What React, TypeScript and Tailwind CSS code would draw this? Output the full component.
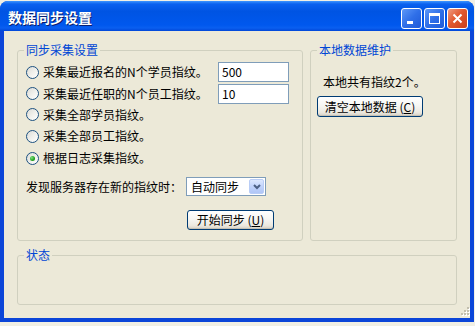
import React from "react";

function Radio({ checked = false }: { checked?: boolean }) {
  return (
    <span className="relative grid h-[13px] w-[13px] shrink-0 place-items-center rounded-full border border-[#1c5180] bg-[linear-gradient(135deg,#dcdcd7_0%,#f3f3ef_60%,#ffffff_100%)]">
      {checked && (
        <span className="h-[5px] w-[5px] rounded-full bg-[radial-gradient(circle_at_35%_35%,#7fe07f_0%,#21a121_60%,#128512_100%)]" />
      )}
    </span>
  );
}

function XpButton({
  label,
  hotkey,
  className,
}: {
  label: string;
  hotkey: string;
  className?: string;
}) {
  return (
    <button
      type="button"
      className={
        "flex items-center justify-center rounded-[3px] border border-[#003c74] bg-[linear-gradient(to_bottom,#ffffff_0%,#f6f6f3_45%,#ece9e0_80%,#d6d0c5_100%)] text-[12px] leading-[14px] text-black shadow-[inset_0_-1px_0_#c6c1b4] " +
        (className ?? "")
      }
    >
      {label} (<u>{hotkey}</u>)
    </button>
  );
}

function GroupBox({
  title,
  className,
  children,
}: {
  title: string;
  className?: string;
  children?: React.ReactNode;
}) {
  return (
    <fieldset
      className={
        "rounded-[3px] border border-[#d0d0bf] " + (className ?? "")
      }
    >
      <legend className="ml-[6px] px-[2px] text-[12px] leading-[14px] text-[#0046d5]">
        {title}
      </legend>
      {children}
    </fieldset>
  );
}

function RadioRow({
  label,
  value,
  checked,
  h,
}: {
  label: string;
  value?: string;
  checked?: boolean;
  h: string;
}) {
  return (
    <div className={"flex items-center gap-[4px] " + h}>
      <Radio checked={checked} />
      <span className="flex-1 text-[12px] leading-[14px]">{label}</span>
      {value !== undefined && (
        <div className="mr-[13px] flex h-[20px] w-[71px] items-center border border-[#7f9db9] bg-white pl-[3px] text-[12px]">
          {value}
        </div>
      )}
    </div>
  );
}

export default function App() {
  return (
    <div className="h-[326px] w-[475px] overflow-hidden bg-[#f1efe4] pt-px font-['Noto_Sans_CJK_SC',sans-serif] text-black">
      <div className="flex h-[321px] w-[474px] flex-col overflow-hidden rounded-t-[8px] bg-[#0b45d8]">
        {/* title bar */}
        <div className="flex h-[30px] shrink-0 items-start justify-between bg-[linear-gradient(to_bottom,#3d95ff_0%,#0a61ef_10%,#0054e3_35%,#0058ee_80%,#0a5ff0_90%,#0046d8_100%)] pl-[8px] pr-[6px]">
          <span className="mt-[7px] text-[14px] font-bold leading-[18px] text-white [text-shadow:1px_1px_0_#0a1f6e]">
            数据同步设置
          </span>
          <div className="mt-[7px] flex gap-[2px]">
            <div className="relative h-[21px] w-[21px] rounded-[3px] border border-white bg-[linear-gradient(135deg,#5d98f8_0%,#2f6fe8_50%,#1f5ad8_100%)]">
              <span className="absolute bottom-[4px] left-[5px] h-[3px] w-[6px] bg-white" />
            </div>
            <div className="grid h-[21px] w-[21px] place-items-center rounded-[3px] border border-white bg-[linear-gradient(135deg,#5d98f8_0%,#2f6fe8_50%,#1f5ad8_100%)]">
              <span className="h-[11px] w-[11px] border border-t-[3px] border-white" />
            </div>
            <div className="grid h-[21px] w-[21px] place-items-center rounded-[3px] border border-white bg-[linear-gradient(135deg,#ee9a80_0%,#e2582f_45%,#c9401c_100%)]">
              <svg width="11" height="11" viewBox="0 0 11 11">
                <path d="M1.5 1.5 L9.5 9.5 M9.5 1.5 L1.5 9.5" stroke="#fff" strokeWidth="2" />
              </svg>
            </div>
          </div>
        </div>

        {/* client area */}
        <div className="relative mx-[4px] mb-[4px] flex flex-1 flex-col bg-[#ece9d8] px-[13px] pt-[12px]">
          <div className="flex gap-[7px]">
            <GroupBox title="同步采集设置" className="h-[198px] w-[286px] shrink-0">
              <div className="pl-[8px] pt-[4px]">
                <RadioRow h="h-[22px]" label="采集最近报名的N个学员指纹。" value="500" />
                <RadioRow h="h-[21px]" label="采集最近任职的N个员工指纹。" value="10" />
                <RadioRow h="h-[21px]" label="采集全部学员指纹。" />
                <RadioRow h="h-[22px]" label="采集全部员工指纹。" />
                <RadioRow h="h-[22px]" label="根据日志采集指纹。" checked />
                <div className="mt-[8px] flex h-[19px] items-center">
                  <span className="w-[160px] text-[12px] leading-[14px]">
                    发现服务器存在新的指纹时：
                  </span>
                  <div className="flex h-[19px] w-[80px] items-center justify-between border border-[#7f9db9] bg-white pl-[4px] pr-px">
                    <span className="text-[12px] leading-[14px]">自动同步</span>
                    <div className="grid h-[15px] w-[15px] place-items-center rounded-[2px] border border-[#b9cdf6] bg-[linear-gradient(to_bottom,#dde8fe_0%,#c1d3fb_50%,#b0c6f6_100%)]">
                      <svg width="8" height="6" viewBox="0 0 8 6">
                        <path d="M1 1 L4 4 L7 1" fill="none" stroke="#4d6185" strokeWidth="2" />
                      </svg>
                    </div>
                  </div>
                </div>
                <XpButton
                  label="开始同步"
                  hotkey="U"
                  className="ml-[161px] mt-[14px] h-[20px] w-[87px]"
                />
              </div>
            </GroupBox>
            <GroupBox title="本地数据维护" className="h-[198px] flex-1">
              <div className="pl-[6px]">
                <div className="mt-[18px] pl-[6px] text-[12px] leading-[14px]">
                  本地共有指纹2个。
                </div>
                <XpButton
                  label="清空本地数据"
                  hotkey="C"
                  className="mt-[7px] h-[21px] w-[106px]"
                />
              </div>
            </GroupBox>
          </div>
          <GroupBox title="状态" className="mt-[7px] h-[57px]" />

          {/* resize grip */}
          <svg
            className="absolute bottom-0 right-0"
            width="12"
            height="12"
            viewBox="0 0 12 12"
          >
            {[
              [9, 1],
              [6, 4],
              [9, 4],
              [3, 7],
              [6, 7],
              [9, 7],
            ].map(([x, y]) => (
              <g key={`${x}-${y}`}>
                <rect x={x + 1} y={y + 1} width="2" height="2" fill="#fff" />
                <rect x={x} y={y} width="2" height="2" fill="#c3bfae" />
              </g>
            ))}
          </svg>
        </div>
      </div>
    </div>
  );
}
